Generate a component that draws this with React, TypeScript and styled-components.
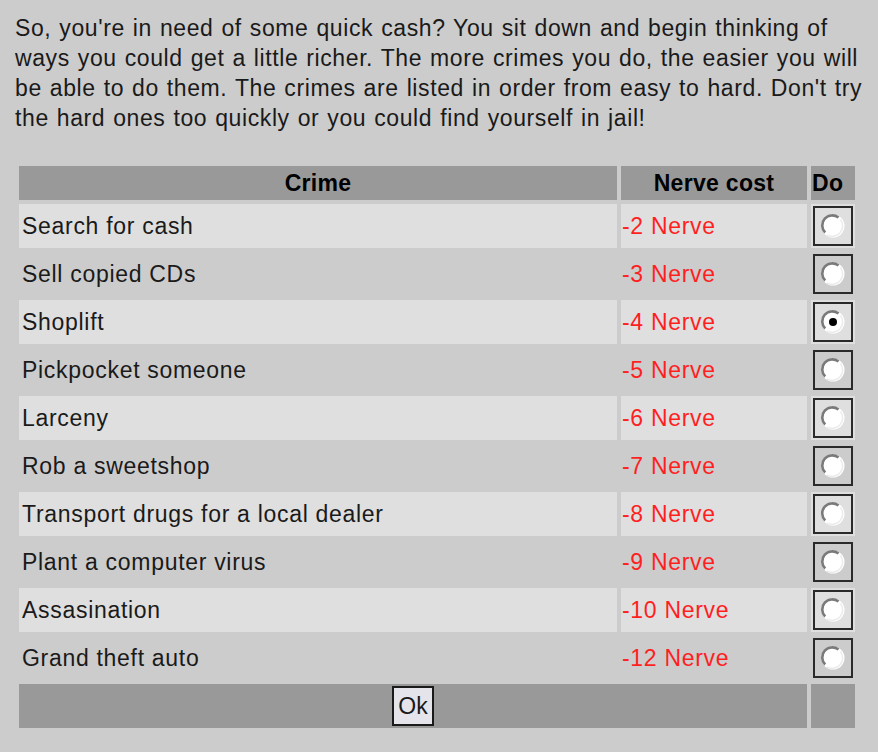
import React, { useState } from "react";
import styled, { createGlobalStyle } from "styled-components";

const Global = createGlobalStyle`
  html, body { margin: 0; padding: 0; background: #cccccc; }
  body { font-family: "Liberation Sans", Arial, sans-serif; color: #1a1a1a; }
`;

const Page = styled.div`
  padding: 13px 15px 0 15px;
  min-height: 739px;
  background: #cccccc;
`;

const Intro = styled.p`
  margin: 0 0 29px 0;
  width: 860px;
  white-space: nowrap;
  font-size: 23px;
  line-height: 30px;
  letter-spacing: 0.6px;
  word-spacing: 1px;
`;

const Table = styled.table`
  border-spacing: 4px;
  table-layout: fixed;
  width: 844px;
  font-size: 23px;
  letter-spacing: 0.7px;
`;

const HeadCell = styled.th<{ $align?: string }>`
  background: #999999;
  height: 34px;
  padding: 0 1px;
  font-weight: bold;
  color: #000;
  letter-spacing: 0.3px;
  text-align: ${(p) => p.$align || "center"};
  vertical-align: middle;
`;

const Row = styled.tr<{ $light: boolean }>`
  td {
    background: ${(p) => (p.$light ? "#dfdfdf" : "transparent")};
  }
`;

const NameCell = styled.td`
  height: 44px;
  padding: 0 3px;
  color: #1a1a1a;
  vertical-align: middle;
  white-space: nowrap;
`;

const CostCell = styled.td`
  height: 44px;
  padding: 0 1px;
  color: #ff1f1f;
  vertical-align: middle;
`;

const DoCell = styled.td`
  height: 44px;
  padding: 0 2px;
  vertical-align: middle;
`;

const RadioBox = styled.label`
  display: flex;
  align-items: center;
  justify-content: center;
  box-sizing: border-box;
  width: 40px;
  height: 40px;
  border: 2px solid #2a2a2a;
  cursor: pointer;
`;

const FootCell = styled.td`
  background: #999999;
  height: 44px;
  padding: 0;
  text-align: center;
  vertical-align: middle;
`;

const OkButton = styled.button`
  box-sizing: border-box;
  width: 42px;
  height: 40px;
  padding: 0;
  border: 2px solid #1a1a1a;
  background: #e4e4ea;
  font-family: "Liberation Sans", Arial, sans-serif;
  font-size: 23px;
  color: #1a1a1a;
  display: inline-flex;
  align-items: center;
  justify-content: center;
  vertical-align: middle;
`;

const crimes: [string, number][] = [
  ["Search for cash", 2],
  ["Sell copied CDs", 3],
  ["Shoplift", 4],
  ["Pickpocket someone", 5],
  ["Larceny", 6],
  ["Rob a sweetshop", 7],
  ["Transport drugs for a local dealer", 8],
  ["Plant a computer virus", 9],
  ["Assasination", 10],
  ["Grand theft auto", 12],
];

function RadioGlyph({ checked }: { checked: boolean }) {
  return (
    <svg width="26" height="26" viewBox="0 0 26 26">
      <circle cx="13" cy="13" r="11.5" fill="#ffffff" />
      <path
        d="M5.2 19.5 A10 10 0 0 1 18.5 4.6"
        fill="none"
        stroke="#7a7a7a"
        strokeWidth="2.6"
      />
      <path
        d="M20.5 6.5 A10.5 10.5 0 0 1 7 22"
        fill="none"
        stroke="#ececec"
        strokeWidth="1.5"
      />
      {checked && <circle cx="13" cy="13" r="4" fill="#000" />}
    </svg>
  );
}

export default function App() {
  const [selected, setSelected] = useState(2);
  return (
    <>
      <Global />
      <Page>
        <Intro>
          So, you're in need of some quick cash? You sit down and begin thinking of
          <br />
          ways you could get a little richer. The more crimes you do, the easier you will
          <br />
          be able to do them. The crimes are listed in order from easy to hard. Don't try
          <br />
          the hard ones too quickly or you could find yourself in jail!
        </Intro>
        <Table>
          <colgroup>
            <col style={{ width: 598 }} />
            <col style={{ width: 186 }} />
            <col style={{ width: 44 }} />
          </colgroup>
          <thead>
            <tr>
              <HeadCell>Crime</HeadCell>
              <HeadCell>Nerve cost</HeadCell>
              <HeadCell $align="left">Do</HeadCell>
            </tr>
          </thead>
          <tbody>
            {crimes.map(([name, cost], i) => (
              <Row key={name} $light={i % 2 === 0}>
                <NameCell>{name}</NameCell>
                <CostCell>-{cost} Nerve</CostCell>
                <DoCell>
                  <RadioBox onClick={() => setSelected(i)}>
                    <RadioGlyph checked={selected === i} />
                  </RadioBox>
                </DoCell>
              </Row>
            ))}
            <tr>
              <FootCell colSpan={2}>
                <OkButton>Ok</OkButton>
              </FootCell>
              <FootCell />
            </tr>
          </tbody>
        </Table>
      </Page>
    </>
  );
}
